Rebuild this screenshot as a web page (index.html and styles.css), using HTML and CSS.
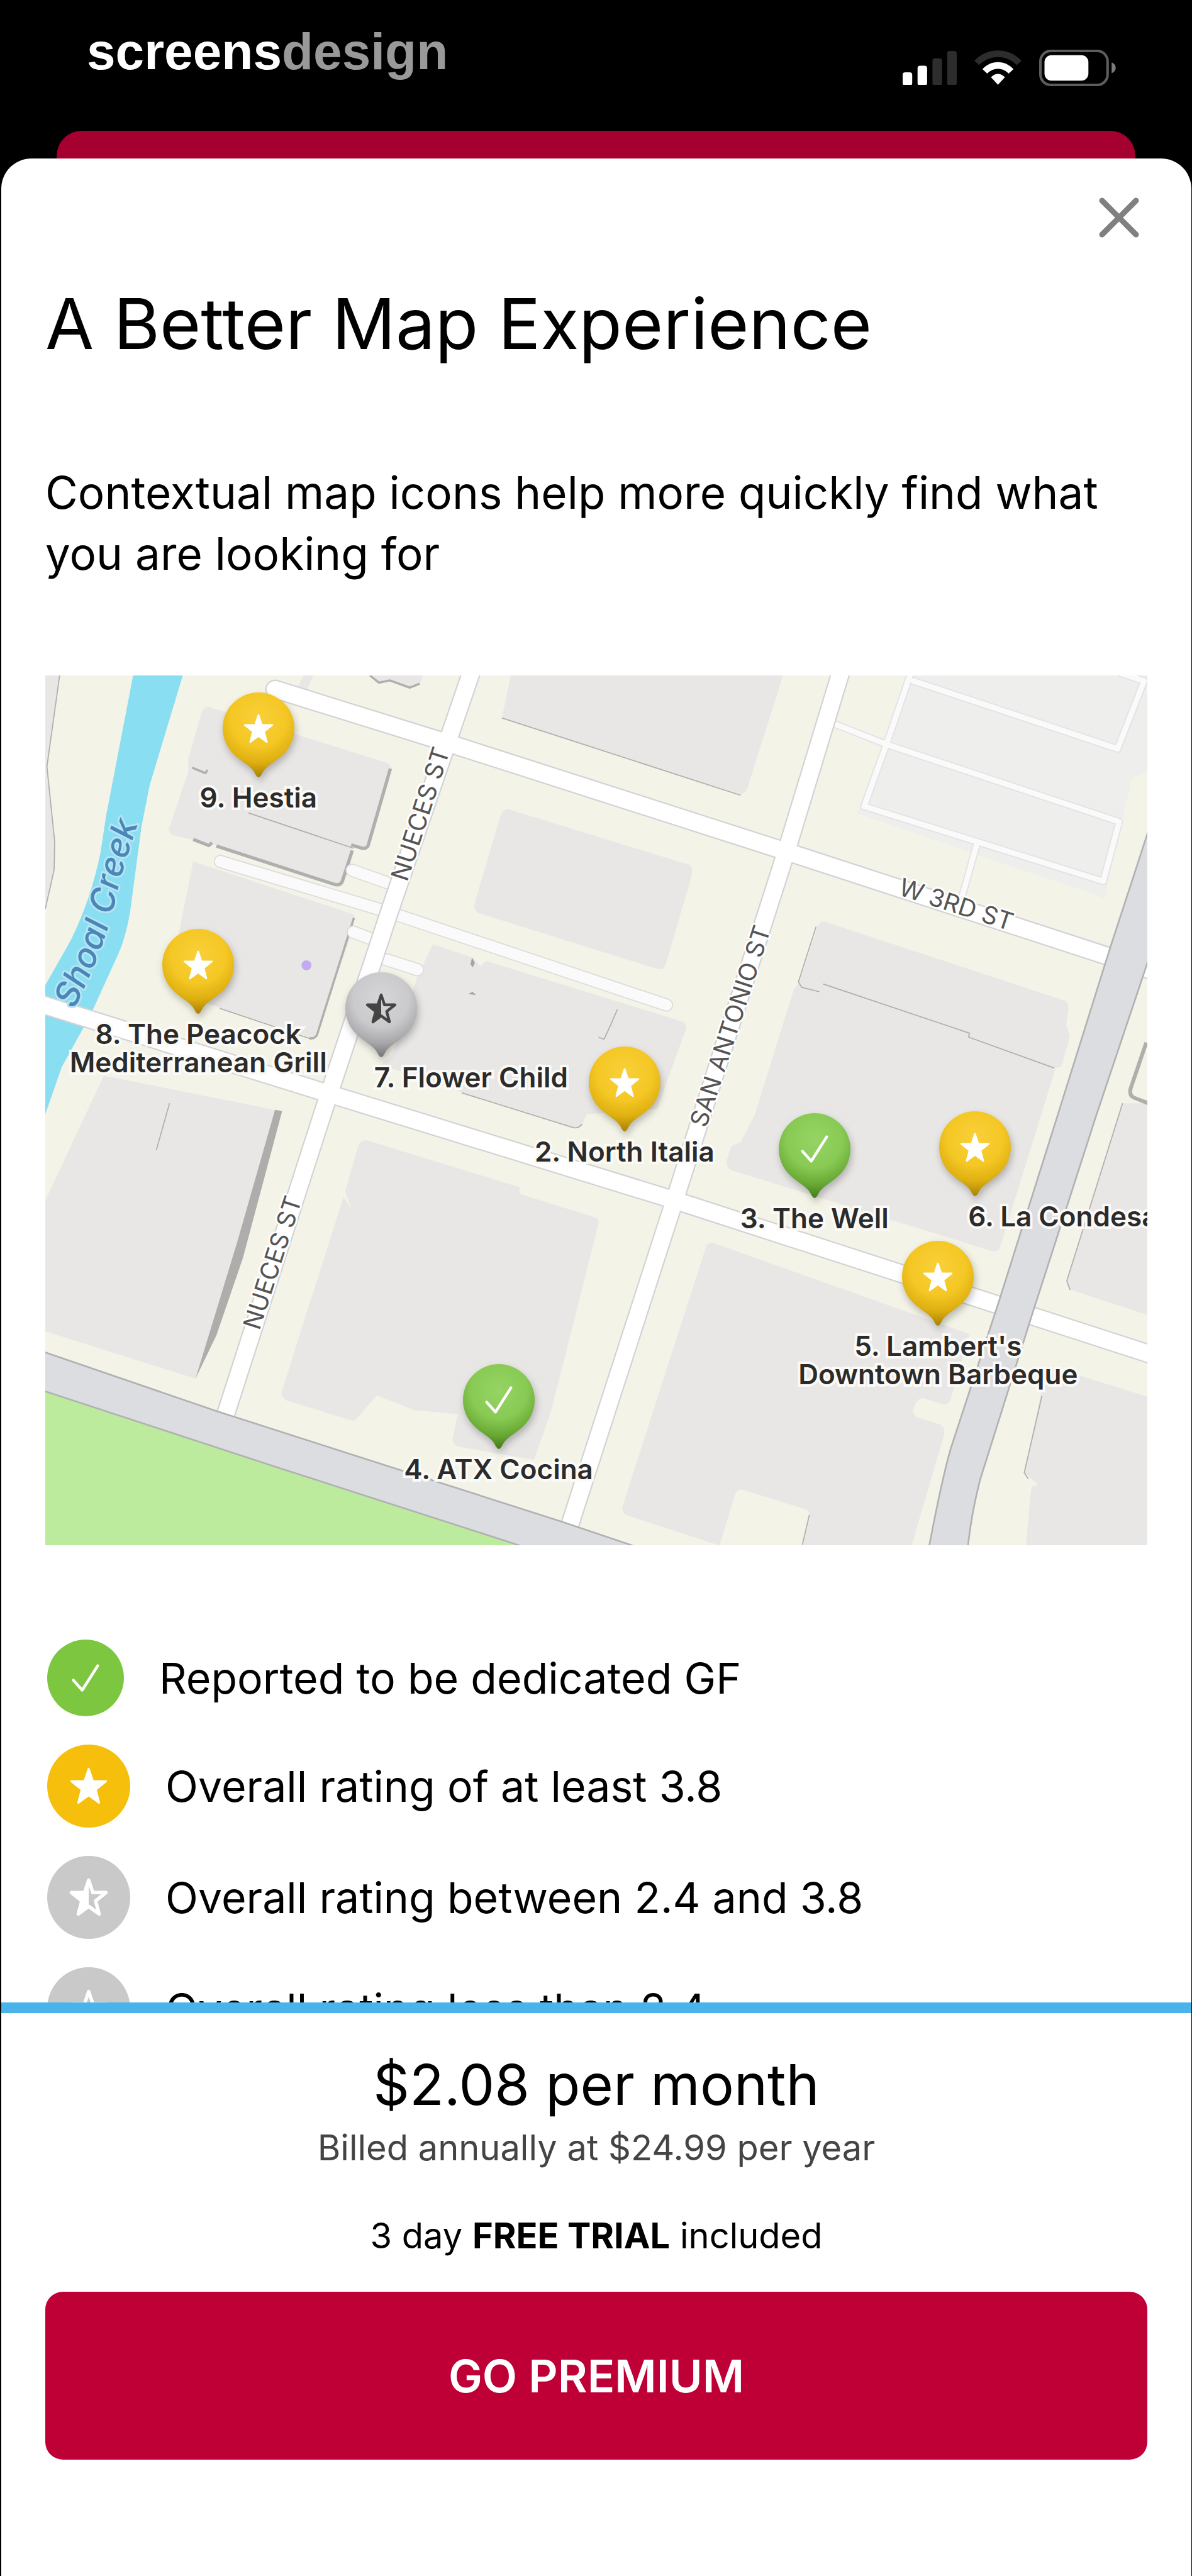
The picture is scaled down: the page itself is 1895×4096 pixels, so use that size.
FILE: index.html
```html
<!DOCTYPE html>
<html lang="en">
<head>
    <meta charset="UTF-8">
    <meta name="viewport" content="width=device-width, initial-scale=1">
    <title>A Better Map Experience</title>
    <link rel="stylesheet" href="styles.css">
</head>
<body>
    <!-- shared shapes -->
    <svg class="defs" width="0" height="0" aria-hidden="true">
        <defs>
            <radialGradient id="gold" gradientUnits="userSpaceOnUse" cx="65" cy="48" r="106">
                <stop offset="0" stop-color="#f9d03a"/>
                <stop offset="0.48" stop-color="#f4c724"/>
                <stop offset="0.75" stop-color="#deaf10"/>
                <stop offset="1" stop-color="#a88006"/>
            </radialGradient>
            <radialGradient id="green" gradientUnits="userSpaceOnUse" cx="65" cy="48" r="106">
                <stop offset="0" stop-color="#96d465"/>
                <stop offset="0.48" stop-color="#88ca54"/>
                <stop offset="0.75" stop-color="#6aab36"/>
                <stop offset="1" stop-color="#447a1a"/>
            </radialGradient>
            <radialGradient id="grey" gradientUnits="userSpaceOnUse" cx="65" cy="48" r="106">
                <stop offset="0" stop-color="#d6d6d8"/>
                <stop offset="0.48" stop-color="#cacacc"/>
                <stop offset="0.75" stop-color="#a9a9ab"/>
                <stop offset="1" stop-color="#757577"/>
            </radialGradient>
            <path id="drop" d="M65 154Q62 154 58 146C51 132 36 128 20 112A65 65 0 1 1 110 112C94 128 79 132 72 146Q68 154 65 154Z"/>
            <path id="star" stroke-linejoin="round" d="M0-25L6-7L25-7L10 5L15 24L0 13L-15 24L-10 5L-25-7L-6-7Z"/>
            <path id="halfstar" d="M0-25V13L-15 24L-10 5L-25-7L-6-7Z"/>
            <path id="check" fill="none" stroke-linecap="round" stroke-linejoin="round" d="M-22 4L-6 22L22-22"/>
        </defs>
    </svg>

    <header class="status">
        <div class="brand">screens<span>design</span></div>
        <div class="icons">
            <svg class="signal" viewBox="0 0 294 188">
                <rect x="0" y="116" width="52" height="72" rx="14" fill="#fff"/>
                <rect x="81" y="80" width="52" height="108" rx="14" fill="#fff"/>
                <rect x="162" y="40" width="52" height="148" rx="14" fill="#2d2d2d"/>
                <rect x="242" y="0" width="52" height="188" rx="14" fill="#2d2d2d"/>
            </svg>
            <svg class="wifi" viewBox="0 0 256 188">
                <path fill="#2d2d2d" d="M0 56C70-18 186-18 256 56L230 80C176 22 80 22 26 80Z"/>
                <path fill="#fff" d="M44 102C90 51 166 51 212 102L186 126C155 92 101 92 70 126Z"/>
                <path fill="#fff" d="M90 146Q128 110 166 146L128 187Z"/>
            </svg>
            <svg class="battery" viewBox="0 0 416 198">
                <rect x="7" y="7" width="364" height="184" rx="56" fill="none" stroke="#5c5e5d" stroke-width="14"/>
                <rect x="29" y="30" width="238" height="138" rx="38" fill="#fff"/>
                <path fill="#7b7b7b" d="M393 68Q415 78 415 98T393 128Z"/>
            </svg>
        </div>
    </header>

    <div class="behind"></div>

    <main class="sheet">
        <div class="content">
            <button class="close" type="button" aria-label="Close">
                <svg viewBox="0 0 64 64"><path d="M5 5L59 59M59 5L5 59"/></svg>
            </button>
            <h1>A Better Map Experience</h1>
            <p class="lead">Contextual map icons help more quickly find what you are looking for</p>

            <div class="map">
                <svg class="ground" viewBox="0 0 1751 1382">
                    <g transform="scale(.8773) translate(-82 -1225)">
                        <!-- water and park -->
                        <path fill="#8adef1" d="M241 1225L192 1480L182 1546Q165 1630 128 1705L82 1786V2020L112 1934L163 1842L214 1730Q232 1690 239 1628L256 1500L271 1424L331 1225Z"/>
                        <path fill="#bceb9e" d="M82 2500L960 2801H82Z"/>

                        <!-- parking lot -->
                        <path fill="#eeeeec" d="M1641 1225H2080V1400L2050 1410L2000 1628L1552 1475L1600 1350Z"/>

                        <!-- buildings -->
                        <g class="building">
                            <path d="M82 1225H108L85 1390L99 1526L98 1577L82 1648Z"/>
                            <path d="M378 1282L700 1383Q710 1388 708 1398L668 1530Q664 1540 652 1536L638 1536L619 1598Q616 1606 605 1603L392 1532L312 1514Q304 1508 307 1500L341 1399V1375L366 1290Q370 1280 378 1282Z"/>
                            <path d="M350 1562L641 1658L638 1690L568 1883L399 1827L322 1800L322 1700Z"/>
                            <path d="M925 1225L909 1302L1341 1442L1352 1434L1418 1225Z"/>
                            <path d="M920 1467L1248 1568Q1256 1572 1252 1590L1206 1748Q1202 1760 1188 1756L868 1656Q856 1650 860 1636L906 1480Q910 1466 920 1467Z"/>
                            <path d="M784 1712L856 1736L870 1752L880 1742L1236 1852Q1244 1856 1242 1866L1190 2010L1062 2020L1054 2040Q1048 2046 1038 2043L836 1980L690 1930L711 1911L756 1771Z"/>
                            <path d="M667 1225L686 1238L706 1234L742 1247L760 1240L766 1225Z"/>
                            <path d="M550 1225H567L555 1254L538 1248Z"/>
                            <path d="M1494 1671L1928 1814Q1936 1818 1935 1828L1931 1858L1938 1878L1922 1934L1912 1936L1812 2258Q1808 2272 1794 2267L1324 2121Q1314 2116 1316 2104L1324 2078L1342 2070L1367 2020L1437 1796L1447 1781L1480 1682Q1484 1670 1494 1671Z"/>
                            <path d="M1292 2253L1756 2418L1722 2535Q1718 2548 1706 2545L1672 2534Q1662 2534 1656 2548T1660 2568L1700 2581Q1713 2586 1710 2600L1651 2801H1453L1467 2750Q1468 2740 1460 2736L1345 2700Q1335 2698 1331 2710L1303 2801L1134 2746Q1124 2740 1128 2728L1277 2265Q1280 2250 1292 2253Z"/>
                            <path d="M664 2067L941 2152V2164L1079 2207Q1086 2210 1083 2222L998 2558L967 2646L830 2622Q818 2618 820 2606L829 2563L750 2556L683 2529L641 2576L518 2538Q508 2532 511 2520L545 2412L622 2170L636 2190L625 2160L648 2080Q652 2066 664 2067Z"/>
                            <path d="M188 1950L504 2013L354 2499L82 2413V2176Z"/>
                            <path d="M2033 2000L1933 2320Q1930 2334 1942 2339L2080 2384V2000Z"/>
                            <path d="M1896 2475L2080 2532V2801H1858L1868 2695L1880 2690L1855 2669Z"/>
                        </g>

                        <!-- building shadows -->
                        <g fill="none" stroke="#b0afad" stroke-linejoin="round">
                            <path stroke-width="6" d="M707 1394L667 1532Q664 1541 652 1537L636 1532M638 1542L620 1598Q616 1607 604 1603L392 1534M384 1528L378 1533L350 1522"/>
                            <path stroke-width="4" d="M348 1392L372 1402L376 1396M641 1664L574 1876Q570 1884 560 1882M670 1225L686 1238L706 1234L742 1247L760 1240"/>
                            <path stroke-width="2" d="M450 1474L640 1538M398 1828L565 1884M909 1302L1341 1442M836 1981L1038 2044Q1048 2046 1054 2038M1478 1680L1446 1780L1452 1790L1484 1798M1491 1784L1756 1873L1754 1880L1909 1936M2033 2000L1932 2322L1938 2338M1887 2530L1855 2669L1862 2680M307 2000L283 2085M1466 2745L1453 2800M108 1225L85 1390L99 1526L98 1577L82 1648M1118 1830L1106 1858L1094 1884L1084 1880"/>
                            <path stroke-width="7" d="M2076 1890L2048 1972Q2044 1986 2054 1990L2080 2000"/>
                        </g>
                        <path fill="#aeadab" d="M498 2012L511 2014L440 2280L392 2420L354 2499L430 2250Z"/>
                        <path fill="#a5a4a3" d="M855 1736L860 1746L856 1754L852 1748ZM848 1802L856 1798L862 1804Z"/>
                        <circle cx="555" cy="1750" r="9" fill="#c3aaf2"/>

                        <!-- lanes in the lot -->
                        <path class="lane-edge" d="M1654 1235L2024 1358L2072 1235L2030 1221M1648 1225L1606 1348L1565 1462L1998 1598L2027 1490L1606 1350L1514 1314M1769 1531L1743 1623"/>
                        <path class="lane" d="M1654 1235L2024 1358L2072 1235L2030 1221M1648 1225L1606 1348L1565 1462L1998 1598L2027 1490L1606 1350L1514 1314M1769 1531L1743 1623"/>

                        <!-- alleys -->
                        <path class="alley-edge" d="M399 1562L705 1654L1207 1822M638 1578L700 1600M640 1690L672 1702M700 1740L756 1758"/>
                        <path class="alley" d="M399 1562L705 1654L1207 1822M638 1578L700 1600M640 1690L672 1702M700 1740L756 1758"/>

                        <!-- streets -->
                        <path class="street-edge" d="M498 1250L813 1348L1424 1544L2100 1764M70 1819L603 1985L1223 2176L2100 2460M855 1215L705 1654L587 2010L405 2575M1524 1215L1424 1544L1230 2150L1030 2770"/>
                        <path class="street" d="M498 1250L813 1348L1424 1544L2100 1764M70 1819L603 1985L1223 2176L2100 2460M855 1215L705 1654L587 2010L405 2575M1524 1215L1424 1544L1230 2150L1030 2770"/>

                        <!-- main roads -->
                        <path class="road" d="M70 2447L393 2558L724 2664L1018 2758L1160 2806L1150 2820H980L941 2801L510 2662L70 2518Z"/>
                        <path class="road" d="M2090 1475L2011 1717L1916 2020L1810 2356L1722 2625Q1706 2680 1683 2801V2810H1753V2801Q1760 2740 1775 2682L1871 2377L1986 2020L2090 1710Z"/>
                    </g>

                    <text class="street-name" transform="translate(575 329) rotate(-72)">NUECES ST</text>
                    <text class="street-name" transform="translate(340 1042) rotate(-72)">NUECES ST</text>
                    <text class="street-name" transform="translate(1050 720) rotate(-72)">SAN ANTONIO ST</text>
                    <text class="street-name" transform="translate(1354 348) rotate(18)">W 3RD ST</text>
                    <path id="creek" fill="none" d="M46 531C80 460 100 410 112 355S135 275 152 220V120"/>
                    <text class="creek-name"><textPath href="#creek">Shoal Creek</textPath></text>
                </svg>

                <div class="pin hestia">
                    <svg viewBox="0 0 130 154"><use href="#drop" fill="url(#gold)"/><use href="#star" x="65" y="66" class="white"/></svg>
                    <span class="label">9. Hestia</span>
                </div>
                <div class="pin peacock">
                    <svg viewBox="0 0 130 154"><use href="#drop" fill="url(#gold)"/><use href="#star" x="65" y="66" class="white"/></svg>
                    <span class="label">8. The Peacock<br>Mediterranean Grill</span>
                </div>
                <div class="pin flower">
                    <svg viewBox="0 0 130 154"><use href="#drop" fill="url(#grey)"/><use href="#star" x="65" y="66" class="dark-line"/><use href="#halfstar" x="65" y="66" fill="#444"/></svg>
                    <span class="label">7. Flower Child</span>
                </div>
                <div class="pin italia">
                    <svg viewBox="0 0 130 154"><use href="#drop" fill="url(#gold)"/><use href="#star" x="65" y="66" class="white"/></svg>
                    <span class="label">2. North Italia</span>
                </div>
                <div class="pin well">
                    <svg viewBox="0 0 130 154"><use href="#drop" fill="url(#green)"/><use href="#check" x="65" y="65" class="tick"/></svg>
                    <span class="label">3. The Well</span>
                </div>
                <div class="pin condesa">
                    <svg viewBox="0 0 130 154"><use href="#drop" fill="url(#gold)"/><use href="#star" x="65" y="66" class="white"/></svg>
                    <span class="label">6. La Condesa</span>
                </div>
                <div class="pin lambert">
                    <svg viewBox="0 0 130 154"><use href="#drop" fill="url(#gold)"/><use href="#star" x="65" y="66" class="white"/></svg>
                    <span class="label">5. Lambert's<br>Downtown Barbeque</span>
                </div>
                <div class="pin cocina">
                    <svg viewBox="0 0 130 154"><use href="#drop" fill="url(#green)"/><use href="#check" x="65" y="65" class="tick"/></svg>
                    <span class="label">4. ATX Cocina</span>
                </div>
            </div>

            <ul class="legend">
                <li>
                    <svg class="badge small" viewBox="-69 -69 138 138"><circle r="69" fill="#7dc740"/><use href="#check" class="tick"/></svg>
                    Reported to be dedicated GF
                </li>
                <li>
                    <svg class="badge" viewBox="-66 -66 132 132"><circle r="66" fill="#f5bf0b"/><use href="#star" class="white" transform="scale(1.1)"/></svg>
                    Overall rating of at least 3.8
                </li>
                <li>
                    <svg class="badge" viewBox="-66 -66 132 132"><circle r="66" fill="#c9c9c9"/><g transform="scale(1.1)"><use href="#star" class="white-line"/><use href="#halfstar" fill="#fff"/></g></svg>
                    Overall rating between 2.4 and 3.8
                </li>
                <li>
                    <svg class="badge" viewBox="-66 -66 132 132"><circle r="66" fill="#c9c9c9"/><use href="#star" class="white-line" transform="scale(1.1)"/></svg>
                    Overall rating less than 2.4
                </li>
            </ul>
        </div>

        <footer class="offer">
            <p class="price">$2.08 per month</p>
            <p class="billed">Billed annually at $24.99 per year</p>
            <p class="trial">3 day <b>FREE TRIAL</b> included</p>
            <button class="go" type="button">GO PREMIUM</button>
        </footer>
    </main>
</body>
</html>
```
FILE: styles.css
```css
*{
    box-sizing: border-box;
    margin: 0;
    padding: 0;
}

body{
    display: flex;
    flex-direction: column;
    height: 100vh;
    background: #000;
    color: #000;
    font-family: Inter, "Liberation Sans", sans-serif;
}

button{
    border: 0;
    background: none;
    font: inherit;
    cursor: pointer;
}

svg{
    display: block;
}

.defs{
    position: absolute;
}

/* status bar */
.status{
    display: flex;
    flex: none;
    justify-content: space-between;
    height: 208px;
    padding: 36px 121px 0 138px;
}
.brand{
    color: #fff;
    font: bold 82px/92px "Liberation Sans", sans-serif;
}
.brand span{
    color: #999;
}
.icons{
    display: flex;
    align-items: center;
    gap: 28px;
    height: 144px;
}
.signal{
    width: 86px;
}
.wifi{
    width: 75px;
}
.battery{
    width: 122px;
}

/* sheet */
.behind{
    flex: none;
    height: 44px;
    margin: 0 90px;
    border-radius: 40px 40px 0 0;
    background: #a60030;
}
.sheet{
    display: flex;
    flex: 1;
    flex-direction: column;
    min-height: 0;
    margin: 0 1px 0 2px;
    border-radius: 48px 48px 0 0;
    background: #fff;
    overflow: hidden;
}
.content{
    flex: 1;
    min-height: 0;
    padding: 0 70px;
    overflow-y: auto;
    scrollbar-width: none;
}
.close{
    display: block;
    margin: 62px 13px 0 auto;
}
.close svg{
    width: 64px;
    fill: none;
    stroke: #808080;
    stroke-width: 9px;
    stroke-linecap: round;
}
h1{
    margin-top: 64px;
    font-size: 112px;
    font-weight: 400;
    line-height: 144px;
}
.lead{
    margin-top: 149px;
    font-size: 71px;
    line-height: 97px;
}

/* map */
.map{
    position: relative;
    margin-top: 145px;
    background: #f4f3e7;
    overflow: hidden;
}
.ground{
    width: 100%;
}
.building{
    fill: #e8e7e6;
}
.lane, .lane-edge, .alley, .alley-edge, .street, .street-edge{
    fill: none;
    stroke-linecap: round;
    stroke-linejoin: round;
}
.lane{
    stroke: #fafafa;
    stroke-width: 10px;
}
.lane-edge{
    stroke: #e2e1e4;
    stroke-width: 14px;
}
.alley{
    stroke: #fafafa;
    stroke-width: 20px;
}
.alley-edge{
    stroke: #dddcdc;
    stroke-width: 24px;
}
.street{
    stroke: #fff;
    stroke-width: 30px;
}
.street-edge{
    stroke: #d3d2d4;
    stroke-width: 35px;
}
.road{
    fill: #dcdde1;
    stroke: #b1b1b3;
    stroke-width: 3px;
}
.street-name{
    fill: #555;
    stroke: #fff;
    stroke-width: 6px;
    stroke-linejoin: round;
    paint-order: stroke;
    font-size: 39px;
}
.creek-name{
    fill: #4a86b8;
    stroke: #b5e4f3;
    stroke-width: 6px;
    stroke-linejoin: round;
    paint-order: stroke;
    font-size: 54px;
    font-style: italic;
    font-weight: 500;
}

/* every pin is anchored at its tip */
.pin{
    position: absolute;
    width: 114px;
    transform: translate(-50%, -100%);
}
.pin svg{
    width: 100%;
    overflow: visible;
    filter: drop-shadow(2px 6px 6px rgba(0, 0, 0, .25));
}
.label{
    position: absolute;
    top: 100%;
    left: 50%;
    margin-top: 10px;
    transform: translateX(-50%);
    color: #2b2b2b;
    font-size: 44px;
    font-weight: 600;
    line-height: 45px;
    text-align: center;
    white-space: nowrap;
    -webkit-text-stroke: 8px #fbfaf7;
    paint-order: stroke fill;
}
.hestia{ left: 19.34%; top: 11.68%; }
.peacock{ left: 13.88%; top: 38.9%; }
.flower{ left: 30.46%; top: 43.91%; }
.italia{ left: 52.56%; top: 52.41%; }
.well{ left: 69.79%; top: 60.09%; }
.condesa{ left: 84.37%; top: 59.9%; }
.lambert{ left: 81.01%; top: 74.75%; }
.cocina{ left: 41.13%; top: 88.96%; }
.flower .label, .condesa .label{
    left: 46px;
    transform: none;
}

.white{
    fill: #fff;
    stroke: #fff;
    stroke-width: 3px;
}
.white-line, .dark-line{
    fill: none;
    stroke: #fff;
    stroke-width: 5px;
}
.dark-line{
    stroke: #444;
}
.tick{
    stroke: #fff;
    stroke-width: 5px;
}

/* legend */
.legend{
    display: flex;
    flex-direction: column;
    gap: 45px;
    margin-top: 150px;
    list-style: none;
    font-size: 68px;
    line-height: 80px;
}
.legend li{
    display: flex;
    align-items: center;
    gap: 56px;
    padding-left: 3px;
}
.badge{
    flex: none;
    width: 132px;
}
.badge.small{
    width: 122px;
}

/* offer */
.offer{
    flex: none;
    padding: 60px 70px 185px;
    border-top: 17px solid #4ab4ea;
    background: #fff;
    text-align: center;
}
.price{
    font-size: 90px;
    line-height: 108px;
}
.billed{
    margin-top: 12px;
    color: #444;
    font-size: 56px;
    line-height: 68px;
}
.trial{
    margin-top: 72px;
    font-size: 56px;
    line-height: 68px;
}
.trial b{
    font-weight: 700;
}
.go{
    display: block;
    width: 100%;
    height: 267px;
    margin-top: 55px;
    border-radius: 28px;
    background: #be0037;
    color: #fff;
    font-size: 72px;
    font-weight: 600;
}
```
